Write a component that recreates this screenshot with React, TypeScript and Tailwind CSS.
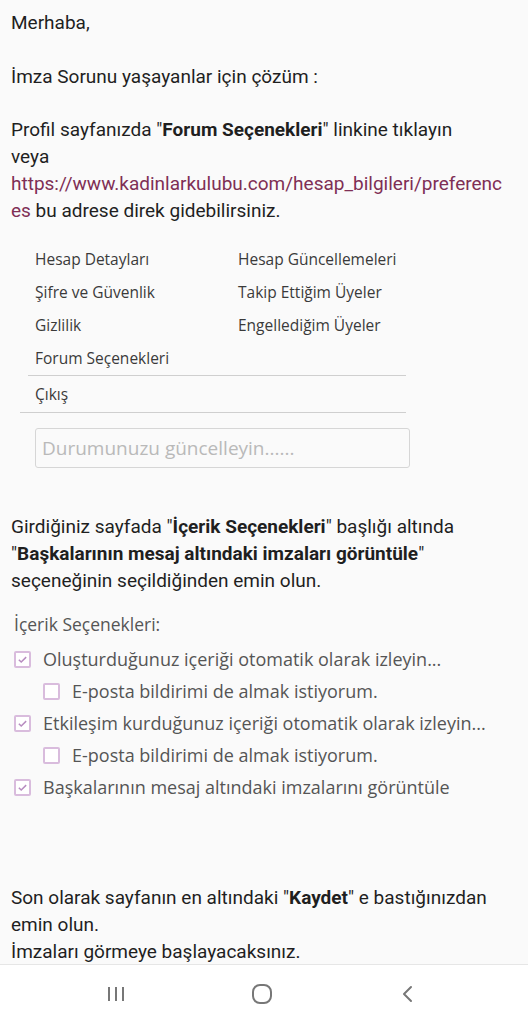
const menuFont = { fontFamily: '"Open Sans", "Noto Sans", sans-serif' };

function Box({ checked }: { checked?: boolean }) {
  return (
    <span className="flex h-[17px] w-[17px] shrink-0 items-center justify-center rounded-[2px] border-2 border-[#d9bcdd] bg-white">
      {checked && (
        <svg viewBox="0 0 12 12" className="h-[11px] w-[11px]">
          <path d="M2 6.2l2.6 2.6L10 3.4" fill="none" stroke="#b78cc0" strokeWidth="1.6" />
        </svg>
      )}
    </span>
  );
}

function Option({ label, checked, indent }: { label: string; checked?: boolean; indent?: boolean }) {
  return (
    <div className={`flex h-[32px] items-center gap-[12px] ${indent ? "pl-[43px]" : "pl-[14px]"}`}>
      <Box checked={checked} />
      <span className="text-[18px] text-[#555]" style={menuFont}>
        {label}
      </span>
    </div>
  );
}

export default function App() {
  return (
    <div className="flex h-[1024px] w-[528px] flex-col bg-[#fafafa]" style={{ fontFamily: 'Roboto, "Liberation Sans", sans-serif' }}>
      <div className="flex-1 overflow-hidden pt-[9px] text-[19px] leading-[27px] text-[#1f1f1f]">
        <div className="px-[11px]">
          <p>Merhaba,</p>
          <p className="mt-[27px]">İmza Sorunu yaşayanlar için çözüm :</p>
          <p className="mt-[26px]">
            Profil sayfanızda "<b>Forum Seçenekleri</b>" linkine tıklayın
            <br />
            veya
            <br />
            <span className="text-[#7f2f55]">https://www.kadinlarkulubu.com/hesap_bilgileri/preferenc</span>
            <br />
            <span className="text-[#7f2f55]">es</span> bu adrese direk gidebilirsiniz.
          </p>
        </div>

        <div className="mt-[19px] w-[406px] pl-[20px] text-[15.5px] leading-[33px] text-[#3a3a3a]" style={menuFont}>
          <div className="ml-[8px] grid grid-cols-[203px_1fr] border-b border-[#cfcfcf] pl-[7px]">
            <span>Hesap Detayları</span>
            <span>Hesap Güncellemeleri</span>
            <span>Şifre ve Güvenlik</span>
            <span>Takip Ettiğim Üyeler</span>
            <span>Gizlilik</span>
            <span>Engellediğim Üyeler</span>
            <span>Forum Seçenekleri</span>
          </div>
          <div className="h-[37px] border-b border-[#cfcfcf] pl-[15px] leading-[36px]">Çıkış</div>
          <div className="ml-[15px] mt-[15px] flex h-[40px] w-[375px] items-center rounded-[3px] border border-[#d6d6d6] bg-[#fafafa] pl-[6px] text-[19px] text-[#b9b9b9]">
            Durumunuzu güncelleyin......
          </div>
        </div>

        <div className="mt-[45px] px-[11px]">
          <p>
            Girdiğiniz sayfada "<b>İçerik Seçenekleri</b>" başlığı altında
            <br />
            "<b>Başkalarının mesaj altındaki imzaları görüntüle</b>"
            <br />
            seçeneğinin seçildiğinden emin olun.
          </p>
        </div>

        <div className="mt-[14px]">
          <div className="pl-[14px] text-[17.5px] leading-[32px] text-[#555]" style={menuFont}>
            İçerik Seçenekleri:
          </div>
          <div className="mt-[3px]">
            <Option checked label="Oluşturduğunuz içeriği otomatik olarak izleyin..." />
            <Option indent label="E-posta bildirimi de almak istiyorum." />
            <Option checked label="Etkileşim kurduğunuz içeriği otomatik olarak izleyin..." />
            <Option indent label="E-posta bildirimi de almak istiyorum." />
            <Option checked label="Başkalarının mesaj altındaki imzalarını görüntüle" />
          </div>
        </div>

        <div className="mt-[81px] px-[11px]">
          <p>
            Son olarak sayfanın en altındaki "<b>Kaydet</b>" e bastığınızdan
            <br />
            emin olun.
            <br />
            İmzaları görmeye başlayacaksınız.
          </p>
        </div>
      </div>

      <nav className="flex h-[60px] shrink-0 items-center gap-[86px] border-t border-[#e6e6e6] bg-white pb-[2px] pl-[86px]">
        <span className="flex w-[60px] justify-center">
          <svg width="22" height="18" viewBox="0 0 22 18" className="text-[#777]">
            <path d="M4 2v14M11 2v14M18 2v14" stroke="currentColor" strokeWidth="2" />
          </svg>
        </span>
        <span className="flex w-[60px] justify-center">
          <svg width="24" height="24" viewBox="0 0 24 24" className="text-[#777]">
            <rect x="3" y="3" width="18" height="18" rx="7" fill="none" stroke="currentColor" strokeWidth="2" />
          </svg>
        </span>
        <span className="flex w-[60px] justify-center">
          <svg width="20" height="20" viewBox="0 0 20 20" className="text-[#777]">
            <path d="M13 3l-7 7 7 7" fill="none" stroke="currentColor" strokeWidth="2" strokeLinecap="round" strokeLinejoin="round" />
          </svg>
        </span>
      </nav>
    </div>
  );
}
